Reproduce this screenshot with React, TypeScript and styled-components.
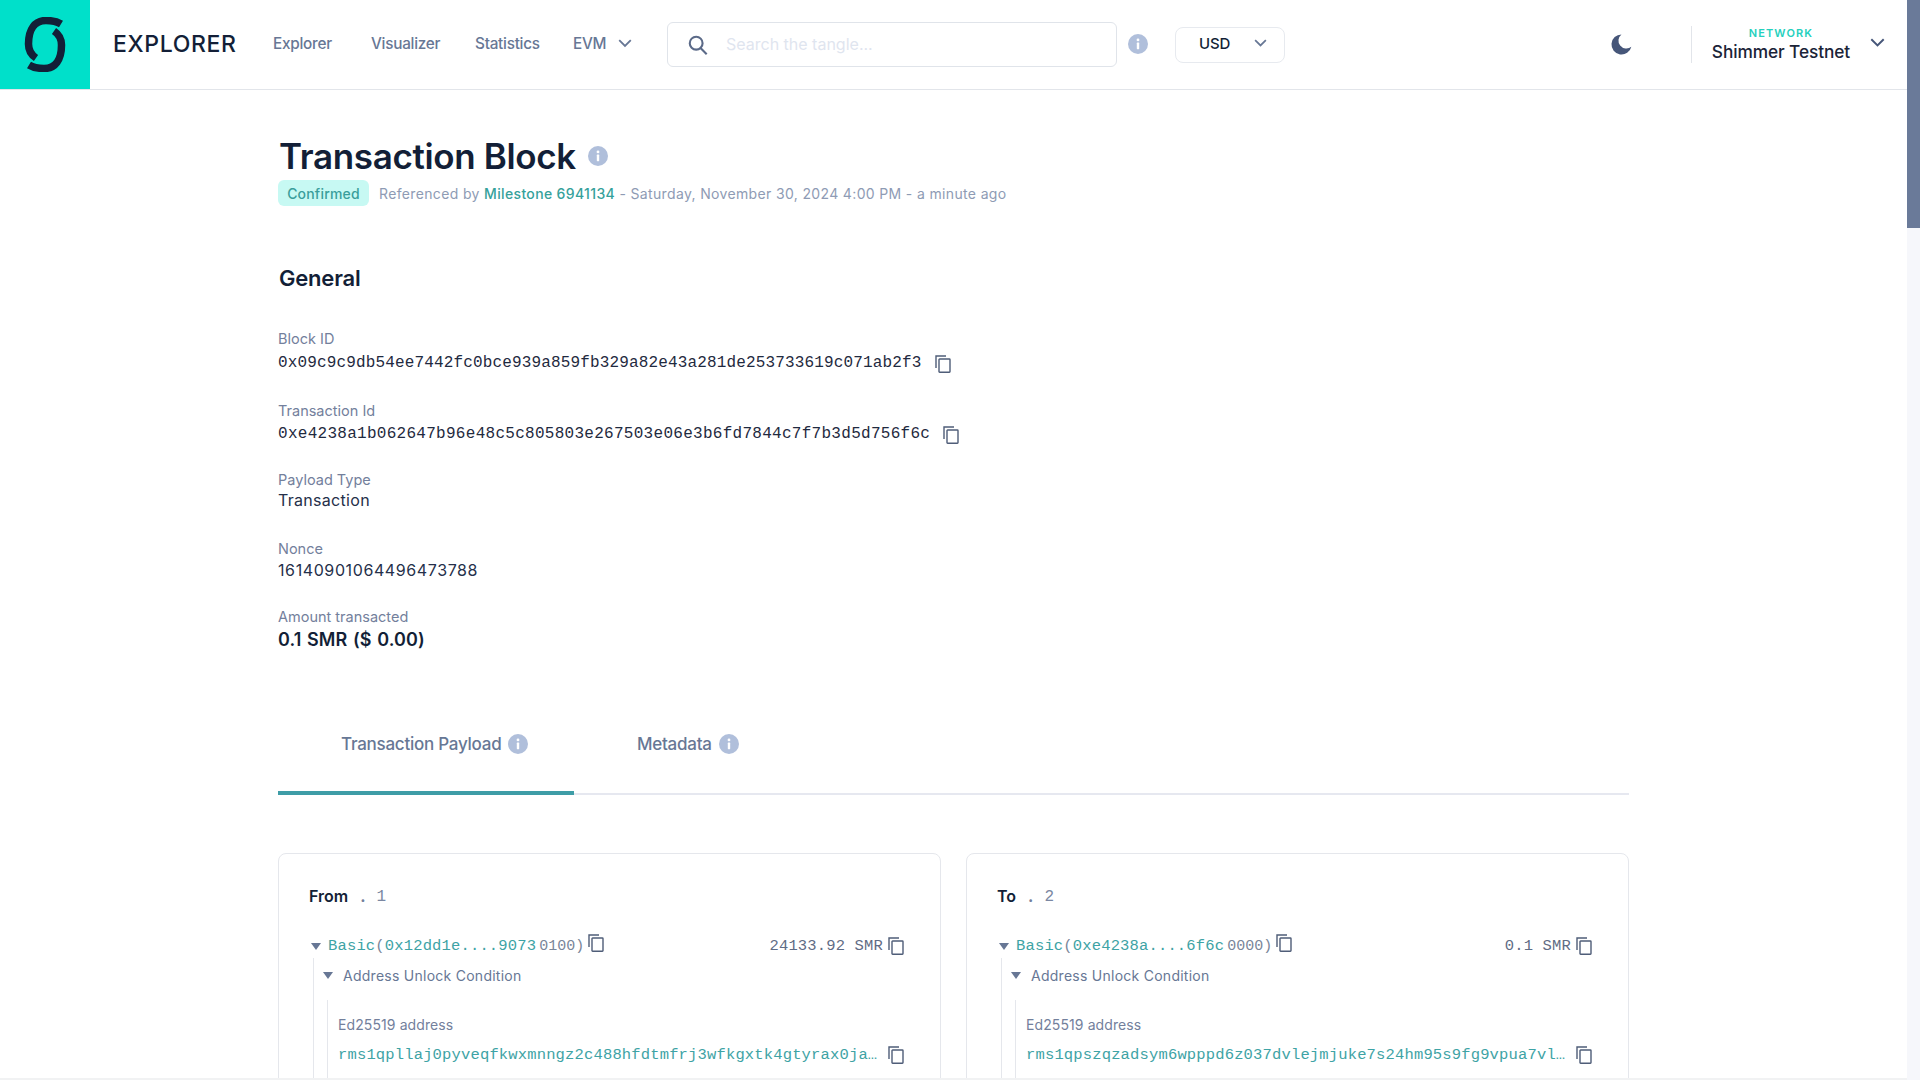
import React from "react";
import styled, { createGlobalStyle } from "styled-components";

const Global = createGlobalStyle`
  html, body { margin: 0; padding: 0; background: #fff; overflow: hidden; }
  body { font-family: Inter, "Liberation Sans", sans-serif; }
  * { box-sizing: border-box; }
`;

const Page = styled.div`
  width: 1920px;
  height: 1080px;
  display: flex;
  overflow: hidden;
  background: #f1f2f3;
`;
const Main = styled.div`
  width: 1907px;
  height: 1078px;
  overflow: hidden;
  display: flex;
  flex-direction: column;
  background: #fff;
`;
const ScrollTrack = styled.div`
  width: 13px;
  height: 1080px;
  background: #f6f7fb;
`;
const ScrollThumb = styled.div`
  height: 228px;
  background: #6a7a99;
`;
const Header = styled.header`
  flex: none;
  height: 90px;
  display: flex;
  align-items: center;
  border-bottom: 1px solid #e2e5ea;
`;
const LogoBox = styled.div`
  width: 90px;
  height: 89px;
  flex: none;
  background: #00e0ca;
  display: flex;
  align-items: center;
  justify-content: center;
`;
const Brand = styled.div`
  margin-left: 23px;
  margin-bottom: 2px;
  width: 127px;
  flex: none;
  font-size: 23px;
  font-weight: 500;
  letter-spacing: 0.65px;
  color: #131f37;
`;
const NavLink = styled.div<{ $w: number }>`
  width: ${(p) => p.$w}px;
  flex: none;
  font-size: 15.3px;
  font-weight: 500;
  letter-spacing: -0.25px;
  color: #677795;
  display: flex;
  align-items: center;
  gap: 12px;
`;
const Nav = styled.nav`
  margin-left: 33px;
  margin-bottom: 2px;
  display: flex;
  align-items: center;
`;
const SearchBox = styled.div`
  width: 450px;
  height: 45px;
  flex: none;
  margin-left: 2px;
  border: 1px solid #e0e4ea;
  border-radius: 6px;
  display: flex;
  align-items: center;
  padding-left: 19px;
  gap: 17px;
`;
const Placeholder = styled.span`
  font-size: 16px;
  margin-bottom: 2px;
  color: #dfe5ef;
`;
const SearchInfo = styled.div`
  margin-left: 11px;
  margin-bottom: 2px;
  display: flex;
`;
const Currency = styled.div`
  margin-left: 27px;
  width: 110px;
  height: 36px;
  flex: none;
  border: 1px solid #e7eaef;
  border-radius: 8px;
  display: flex;
  align-items: center;
  padding: 0 17px 2px 23px;
  justify-content: space-between;
  font-size: 15px;
  font-weight: 500;
  letter-spacing: -0.2px;
  color: #131f37;
`;
const Moon = styled.div`
  margin-left: 325px;
  margin-top: -2px;
  display: flex;
  width: 22px;
`;
const Divider = styled.div`
  margin-left: 59px;
  width: 1px;
  height: 37px;
  background: #e2e5ea;
`;
const Network = styled.div`
  margin-left: 19px;
  width: 140px;
  display: flex;
  flex-direction: column;
  align-items: center;
`;
const NetworkLabel = styled.div`
  font-size: 11px;
  line-height: 13px;
  font-weight: 600;
  letter-spacing: 1.1px;
  color: #25d0bd;
`;
const NetworkName = styled.div`
  font-size: 17.3px;
  line-height: 23px;
  font-weight: 500;
  letter-spacing: -0.1px;
  color: #1b2438;
`;
const NetworkChevron = styled.div`
  margin-left: 19px;
  margin-top: -3px;
  display: flex;
`;

const Content = styled.main`
  margin-left: 278px;
  width: 1351px;
  display: flex;
  flex-direction: column;
`;
const TitleRow = styled.div`
  margin-top: 47px;
  height: 38px;
  display: flex;
  align-items: center;
  gap: 12px;
`;
const Title = styled.h1`
  margin: 0 0 0 1px;
  font-size: 35px;
  line-height: 38px;
  font-weight: 600;
  letter-spacing: -0.35px;
  color: #131f37;
`;
const StatusRow = styled.div`
  margin-top: 5px;
  height: 26px;
  display: flex;
  align-items: center;
  gap: 10px;
  font-size: 14px;
  color: #8e9bb4;
`;
const Badge = styled.span`
  height: 26px;
  width: 91px;
  display: flex;
  align-items: center;
  justify-content: center;
  border-radius: 6px;
  background: #c7f9f3;
  color: #3a9e9b;
  font-weight: 500;
  letter-spacing: 0.2px;
`;
const TealLink = styled.span`
  color: #35a19b;
  font-weight: 500;
`;
const StatusText = styled.span`
  letter-spacing: 0.35px;
`;
const SectionTitle = styled.h2`
  margin: 58px 0 0 1px;
  font-size: 22px;
  line-height: 28px;
  font-weight: 600;
  letter-spacing: -0.2px;
  color: #131f37;
`;
const Field = styled.div<{ $top: number }>`
  margin-top: ${(p) => p.$top}px;
`;
const FieldLabel = styled.div`
  font-size: 14.5px;
  line-height: 18px;
  color: #73809c;
`;
const FieldValue = styled.div<{ $sp?: number; $mt?: number }>`
  margin-top: ${(p) => p.$mt ?? 4}px;
  display: flex;
  align-items: center;
  gap: 13px;
  font-family: "Liberation Mono", "DejaVu Sans Mono", monospace;
  font-size: 16px;
  line-height: 21px;
  letter-spacing: ${(p) => p.$sp ?? 0.15}px;
  color: #1f2a40;
`;
const PlainValue = styled.div<{ $sp: number; $mt: number }>`
  margin-top: ${(p) => p.$mt}px;
  font-size: 16px;
  line-height: 21px;
  letter-spacing: ${(p) => p.$sp}px;
  color: #25304a;
`;
const AmountValue = styled.div`
  margin-top: 2px;
  font-size: 18px;
  line-height: 23px;
  font-weight: 600;
  letter-spacing: 0.1px;
  word-spacing: 1px;
  color: #131f37;
`;
const Tabs = styled.div`
  margin-top: 54px;
  height: 90px;
  display: flex;
  border-bottom: 2px solid #e6e8f0;
`;
const Tab = styled.div<{ $active?: boolean; $w: number }>`
  width: ${(p) => p.$w}px;
  height: 90px;
  padding-left: 63px;
  padding-bottom: 8px;
  display: flex;
  align-items: center;
  gap: 7px;
  font-size: 17px;
  font-weight: 500;
  letter-spacing: -0.25px;
  color: #677795;
  border-bottom: 4px solid ${(p) => (p.$active ? "#3e9da7" : "transparent")};
`;
const Columns = styled.div`
  margin-top: 58px;
  display: grid;
  grid-template-columns: 663px 663px;
  gap: 25px;
`;
const Card = styled.section`
  height: 300px;
  border: 1px solid #e5e7ec;
  border-radius: 8px;
  padding: 30px 36px 0 30px;
`;
const CardHeader = styled.div`
  height: 24px;
  display: flex;
  align-items: center;
  gap: 12px;
`;
const CardTitle = styled.span`
  font-size: 16px;
  font-weight: 600;
  color: #131f37;
`;
const CardDot = styled.span`
  font-size: 16px;
  font-weight: 700;
  color: #73809c;
`;
const CardCount = styled.span`
  margin-top: 2px;
  margin-left: -1px;
  font-family: "Liberation Mono", monospace;
  font-size: 16px;
  color: #7b87a2;
`;
const OutputRow = styled.div`
  margin-top: 26px;
  height: 24px;
  display: flex;
  align-items: center;
  justify-content: space-between;
`;
const OutputLeft = styled.div`
  display: flex;
  align-items: center;
  padding-left: 2px;
`;
const Caret = styled.span<{ $mr: number }>`
  width: 0;
  height: 0;
  border-left: 5.5px solid transparent;
  border-right: 5.5px solid transparent;
  border-top: 7px solid #677795;
  margin-right: ${(p) => p.$mr}px;
`;
const MonoTeal = styled.span`
  font-family: "Liberation Mono", monospace;
  font-size: 15.5px;
  letter-spacing: 0.16px;
  color: #3ea3a5;
`;
const MonoGray = styled.span`
  font-family: "Liberation Mono", monospace;
  font-size: 15.5px;
  letter-spacing: 0.16px;
  color: #7a8699;
`;
const MonoTail = styled.span`
  margin-left: 3px;
  font-family: "Liberation Mono", monospace;
  font-size: 15px;
  color: #7a8699;
`;
const RaisedCopy = styled.span`
  display: flex;
  margin: -6px 0 0 4px;
`;
const Amount = styled.div`
  display: flex;
  align-items: center;
  gap: 5px;
  font-family: "Liberation Mono", monospace;
  font-size: 15.5px;
  letter-spacing: 0.16px;
  color: #5f6c85;
`;
const Nested = styled.div`
  margin-left: 4px;
  border-left: 1px solid #e5e7ec;
  height: 130px;
`;
const CondRow = styled.div`
  padding-left: 9px;
  padding-top: 4px;
  height: 30px;
  display: flex;
  align-items: center;
  font-size: 14px;
  letter-spacing: 0.26px;
  color: #677795;
`;
const AddressBlock = styled.div`
  margin-top: 12px;
  margin-left: 13px;
  height: 85px;
  border-left: 1px solid #e5e7ec;
  padding: 16px 0 0 10px;
`;
const AddressLabel = styled.div`
  font-size: 14px;
  line-height: 18px;
  letter-spacing: 0.1px;
  color: #73809c;
`;
const AddressRow = styled.div`
  margin-top: 12px;
  display: flex;
  align-items: center;
  justify-content: space-between;
`;
const Address = styled.span`
  font-family: "Liberation Mono", monospace;
  font-size: 15.5px;
  letter-spacing: 0.16px;
  color: #3ea3a5;
  white-space: nowrap;
`;

const Info = ({ size = 20 }: { size?: number }) => (
  <svg width={size} height={size} viewBox="0 0 20 20">
    <circle cx="10" cy="10" r="10" fill="#b0bfdb" />
    <rect x="8.8" y="8.6" width="2.4" height="6.6" rx="0.6" fill="#fff" />
    <circle cx="10" cy="5.9" r="1.4" fill="#fff" />
  </svg>
);

const Chevron = ({ color = "#677795", w = 14 }: { color?: string; w?: number }) => (
  <svg width={w} height={w * 0.62} viewBox="0 0 14 9" fill="none">
    <path d="M1 1.2 7 7.2 13 1.2" stroke={color} strokeWidth="1.9" />
  </svg>
);

const Copy = () => (
  <svg width="16" height="18" viewBox="0 0 16 18" fill="none" stroke="#4f5d78" strokeWidth="1.4">
    <path d="M1 13V1h10" />
    <rect x="4" y="4" width="11" height="13.2" rx="0.6" />
  </svg>
);

const OutputCard = ({
  title, count, id, tail, amount, address,
}: { title: string; count: string; id: string; tail: string; amount: string; address: string }) => (
  <Card>
    <CardHeader>
      <CardTitle>{title}</CardTitle>
      <CardDot>.</CardDot>
      <CardCount>{count}</CardCount>
    </CardHeader>
    <OutputRow>
      <OutputLeft>
        <Caret $mr={7} />
        <MonoTeal>Basic</MonoTeal>
        <MonoGray>(</MonoGray>
        <MonoTeal>{id}</MonoTeal>
        <MonoTail>{tail})</MonoTail>
        <RaisedCopy><Copy /></RaisedCopy>
      </OutputLeft>
      <Amount>{amount}<Copy /></Amount>
    </OutputRow>
    <Nested>
      <CondRow><Caret $mr={10} />Address Unlock Condition</CondRow>
      <AddressBlock>
        <AddressLabel>Ed25519 address</AddressLabel>
        <AddressRow>
          <Address>{address}</Address>
          <Copy />
        </AddressRow>
      </AddressBlock>
    </Nested>
  </Card>
);

export default function App() {
  return (
    <Page>
      <Global />
      <Main>
        <Header>
          <LogoBox>
            <svg width="42" height="55" viewBox="0 0 42 55" fill="none" stroke="#131f37" strokeWidth="7.5">
              <path d="M37 7C33 4.5 28 3.5 22 3.5 11 3.5 4.5 12 4.5 27c0 6 3 11 7.5 14" />
              <path d="M5 48c4 2.5 9 3.500 15 3.500 11 0 17.500-8.500 17.500-23.500 0-6-3-11-7.500-14" />
            </svg>
          </LogoBox>
          <Brand>EXPLORER</Brand>
          <Nav>
            <NavLink $w={98}>Explorer</NavLink>
            <NavLink $w={104}>Visualizer</NavLink>
            <NavLink $w={98}>Statistics</NavLink>
            <NavLink $w={92}>EVM <Chevron /></NavLink>
          </Nav>
          <SearchBox>
            <svg width="22" height="22" viewBox="0 0 24 24" fill="none" stroke="#5b6a88" strokeWidth="2.3">
              <circle cx="10" cy="10" r="7" />
              <path d="M15 15.5 21.500 22" />
            </svg>
            <Placeholder>Search the tangle...</Placeholder>
          </SearchBox>
          <SearchInfo><Info /></SearchInfo>
          <Currency>USD <Chevron w={13} /></Currency>
          <Moon>
            <svg width="24" height="24" viewBox="0 0 24 24">
              <path d="M12.500 1.500a11 11 0 1 0 10.800 13.600 8.500 8.500 0 0 1-10.800-13.600Z" fill="#465679" />
            </svg>
          </Moon>
          <Divider />
          <Network>
            <NetworkLabel>NETWORK</NetworkLabel>
            <NetworkName>Shimmer Testnet</NetworkName>
          </Network>
          <NetworkChevron><Chevron color="#465679" w={15} /></NetworkChevron>
        </Header>
        <Content>
          <TitleRow>
            <Title>Transaction Block</Title>
            <Info />
          </TitleRow>
          <StatusRow>
            <Badge>Confirmed</Badge>
            <StatusText>
              Referenced by <TealLink>Milestone 6941134</TealLink> - Saturday, November 30, 2024 4:00 PM - a minute ago
            </StatusText>
          </StatusRow>
          <SectionTitle>General</SectionTitle>
          <Field $top={38}>
            <FieldLabel>Block ID</FieldLabel>
            <FieldValue $mt={5}>0x09c9c9db54ee7442fc0bce939a859fb329a82e43a281de253733619c071ab2f3<Copy /></FieldValue>
          </Field>
          <Field $top={28}>
            <FieldLabel>Transaction Id</FieldLabel>
            <FieldValue $sp={0.28}>0xe4238a1b062647b96e48c5c805803e267503e06e3b6fd7844c7f7b3d5d756f6c<Copy /></FieldValue>
          </Field>
          <Field $top={26}>
            <FieldLabel>Payload Type</FieldLabel>
            <PlainValue $sp={0.3} $mt={1}>Transaction</PlainValue>
          </Field>
          <Field $top={29}>
            <FieldLabel>Nonce</FieldLabel>
            <PlainValue $sp={0.6} $mt={2}>16140901064496473788</PlainValue>
          </Field>
          <Field $top={27}>
            <FieldLabel>Amount transacted</FieldLabel>
            <AmountValue>0.1 SMR ($ 0.00)</AmountValue>
          </Field>
          <Tabs>
            <Tab $active $w={296}>Transaction Payload <Info /></Tab>
            <Tab $w={300}>Metadata <Info /></Tab>
          </Tabs>
          <Columns>
            <OutputCard title="From" count="1" id="0x12dd1e....9073" tail="0100" amount="24133.92 SMR"
              address="rms1qpllaj0pyveqfkwxmnngz2c488hfdtmfrj3wfkgxtk4gtyrax0ja…" />
            <OutputCard title="To" count="2" id="0xe4238a....6f6c" tail="0000" amount="0.1 SMR"
              address="rms1qpszqzadsym6wpppd6z037dvlejmjuke7s24hm95s9fg9vpua7vl…" />
          </Columns>
        </Content>
      </Main>
      <ScrollTrack><ScrollThumb /></ScrollTrack>
    </Page>
  );
}
